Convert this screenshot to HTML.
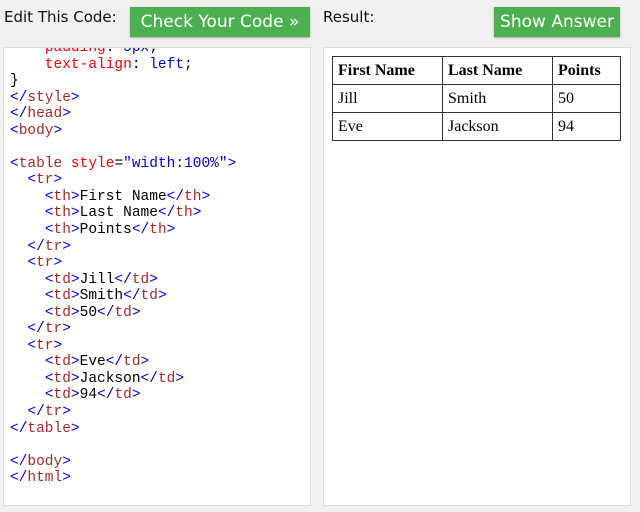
<!DOCTYPE html>
<html><head><style>
body{margin:0;width:640px;height:512px;background:#f1f1f1;position:relative;overflow:hidden;font-family:"DejaVu Sans","Liberation Sans",sans-serif}
.lbl{position:absolute;top:8px;font-size:15px;color:#111}
.btn{position:absolute;top:7px;height:30px;background:#4caf50;color:#fff;font-size:17px;line-height:31px;text-align:center;box-shadow:0 1px 2px rgba(0,0,0,.3)}
.panel{position:absolute;top:47px;height:457px;background:#fff;border:1px solid #ddd;overflow:hidden}
pre{margin:0;position:absolute;left:6px;top:-8px;font-family:"Liberation Mono",monospace;font-size:14.5px;line-height:16.55px;color:#000}
.b{color:#0000cd}.t{color:#a52a2a}.r{color:#e00}.v{color:#0000cd}
table{position:absolute;left:8px;top:8px;border-collapse:collapse;font-family:"Liberation Serif",serif;font-size:16px}
td,th{border:1px solid #333;height:27px;padding:0 5px;text-align:left}
</style></head><body>
<div class="lbl" style="left:4px">Edit This Code:</div>
<div class="btn" style="left:130px;width:180px">Check Your Code »</div>
<div class="lbl" style="left:323px">Result:</div>
<div class="btn" style="left:494px;width:126px">Show Answer</div>
<div class="panel" style="left:3px;width:306px"><pre>    <span class="r">padding</span>: <span class="v">5px</span>;
    <span class="r">text-align</span>: <span class="v">left</span>;
}
<span class="b">&lt;/</span><span class="t">style</span><span class="b">&gt;</span>
<span class="b">&lt;/</span><span class="t">head</span><span class="b">&gt;</span>
<span class="b">&lt;</span><span class="t">body</span><span class="b">&gt;</span>

<span class="b">&lt;</span><span class="t">table</span> <span class="r">style</span>=<span class="v">"width:100%"</span><span class="b">&gt;</span>
  <span class="b">&lt;</span><span class="t">tr</span><span class="b">&gt;</span>
    <span class="b">&lt;</span><span class="t">th</span><span class="b">&gt;</span>First Name<span class="b">&lt;/</span><span class="t">th</span><span class="b">&gt;</span>
    <span class="b">&lt;</span><span class="t">th</span><span class="b">&gt;</span>Last Name<span class="b">&lt;/</span><span class="t">th</span><span class="b">&gt;</span>
    <span class="b">&lt;</span><span class="t">th</span><span class="b">&gt;</span>Points<span class="b">&lt;/</span><span class="t">th</span><span class="b">&gt;</span>
  <span class="b">&lt;/</span><span class="t">tr</span><span class="b">&gt;</span>
  <span class="b">&lt;</span><span class="t">tr</span><span class="b">&gt;</span>
    <span class="b">&lt;</span><span class="t">td</span><span class="b">&gt;</span>Jill<span class="b">&lt;/</span><span class="t">td</span><span class="b">&gt;</span>
    <span class="b">&lt;</span><span class="t">td</span><span class="b">&gt;</span>Smith<span class="b">&lt;/</span><span class="t">td</span><span class="b">&gt;</span>
    <span class="b">&lt;</span><span class="t">td</span><span class="b">&gt;</span>50<span class="b">&lt;/</span><span class="t">td</span><span class="b">&gt;</span>
  <span class="b">&lt;/</span><span class="t">tr</span><span class="b">&gt;</span>
  <span class="b">&lt;</span><span class="t">tr</span><span class="b">&gt;</span>
    <span class="b">&lt;</span><span class="t">td</span><span class="b">&gt;</span>Eve<span class="b">&lt;/</span><span class="t">td</span><span class="b">&gt;</span>
    <span class="b">&lt;</span><span class="t">td</span><span class="b">&gt;</span>Jackson<span class="b">&lt;/</span><span class="t">td</span><span class="b">&gt;</span>
    <span class="b">&lt;</span><span class="t">td</span><span class="b">&gt;</span>94<span class="b">&lt;/</span><span class="t">td</span><span class="b">&gt;</span>
  <span class="b">&lt;/</span><span class="t">tr</span><span class="b">&gt;</span>
<span class="b">&lt;/</span><span class="t">table</span><span class="b">&gt;</span>

<span class="b">&lt;/</span><span class="t">body</span><span class="b">&gt;</span>
<span class="b">&lt;/</span><span class="t">html</span><span class="b">&gt;</span></pre></div>
<div class="panel" style="left:323px;width:306px">
<table>
<tr><th style="width:99px">First Name</th><th style="width:99px">Last Name</th><th style="width:57px">Points</th></tr>
<tr><td>Jill</td><td>Smith</td><td>50</td></tr>
<tr><td>Eve</td><td>Jackson</td><td>94</td></tr>
</table></div>
</body></html>
